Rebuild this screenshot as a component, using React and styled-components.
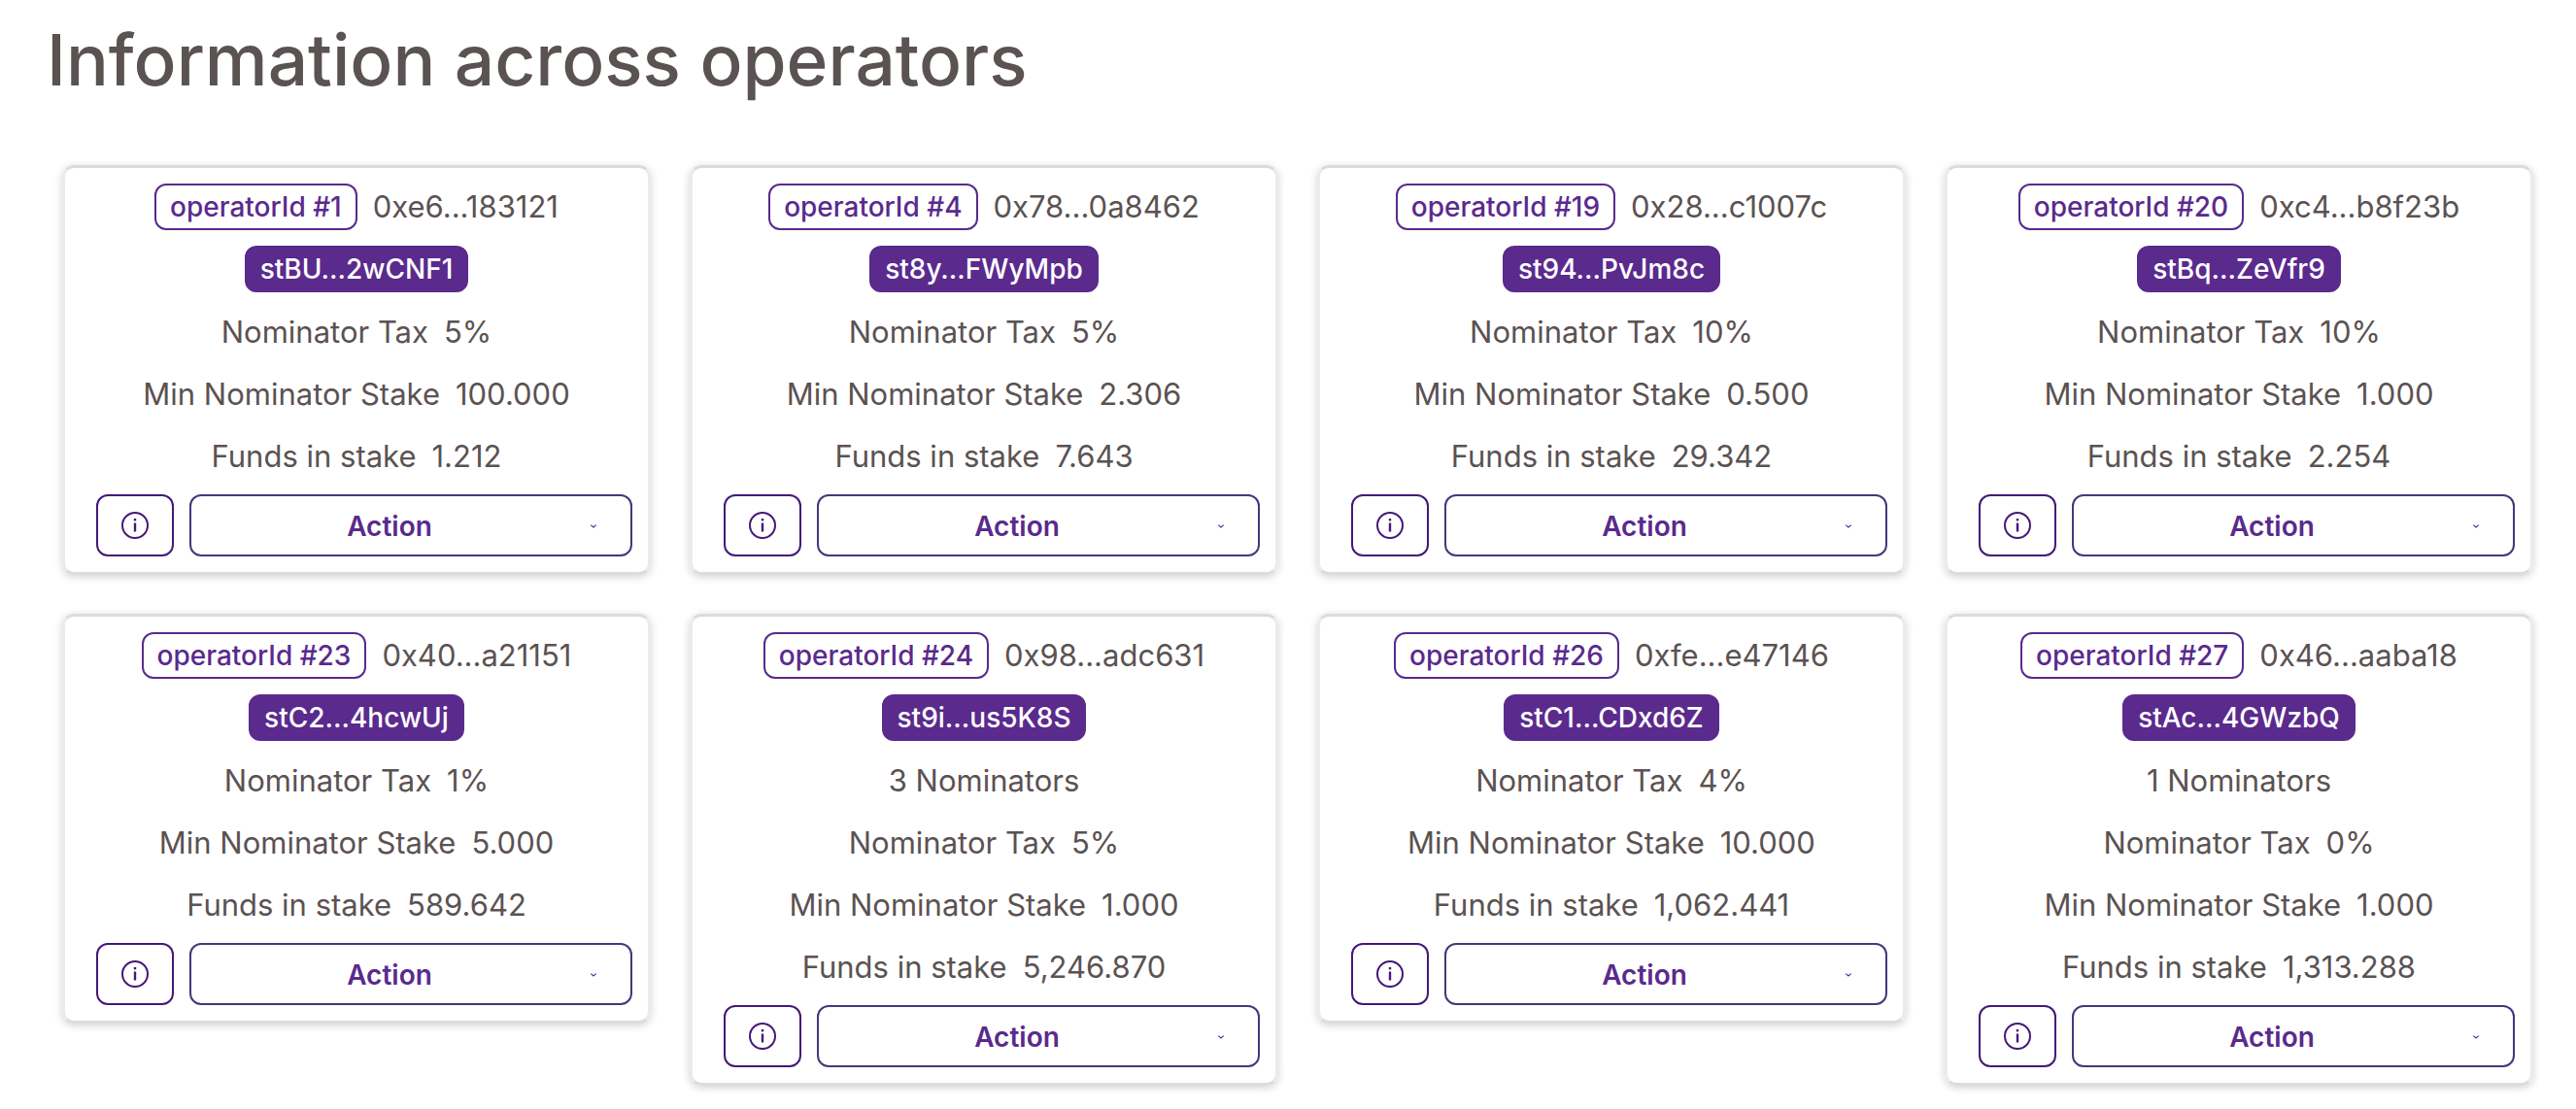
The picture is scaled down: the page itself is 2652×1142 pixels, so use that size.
import React from "react";
import styled, { createGlobalStyle } from "styled-components";

const operators = [
  { id: 1, owner: "0xe6...183121", key: "stBU...2wCNF1", tax: "5%", min: "100.000", funds: "1.212" },
  { id: 4, owner: "0x78...0a8462", key: "st8y...FWyMpb", tax: "5%", min: "2.306", funds: "7.643" },
  { id: 19, owner: "0x28...c1007c", key: "st94...PvJm8c", tax: "10%", min: "0.500", funds: "29.342" },
  { id: 20, owner: "0xc4...b8f23b", key: "stBq...ZeVfr9", tax: "10%", min: "1.000", funds: "2.254" },
  { id: 23, owner: "0x40...a21151", key: "stC2...4hcwUj", tax: "1%", min: "5.000", funds: "589.642" },
  { id: 24, owner: "0x98...adc631", key: "st9i...us5K8S", nominators: 3, tax: "5%", min: "1.000", funds: "5,246.870" },
  { id: 26, owner: "0xfe...e47146", key: "stC1...CDxd6Z", tax: "4%", min: "10.000", funds: "1,062.441" },
  { id: 27, owner: "0x46...aaba18", key: "stAc...4GWzbQ", nominators: 1, tax: "0%", min: "1.000", funds: "1,313.288" },
];

function InfoIcon() {
  return (
    <svg width="28" height="28" viewBox="0 0 28 28" fill="none" aria-hidden="true">
      <circle cx="14" cy="14" r="13" stroke="currentColor" strokeWidth="2" />
      <path d="M14 11.5v9" stroke="currentColor" strokeWidth="2.4" />
      <path d="M14 7v2.4" stroke="currentColor" strokeWidth="2.4" />
    </svg>
  );
}

function ChevronIcon() {
  return (
    <svg width="16" height="16" viewBox="0 0 16 16" fill="none" aria-hidden="true">
      <path d="M5.3 6.6L8 9l2.7-2.4" stroke="currentColor" strokeWidth="1.2" />
    </svg>
  );
}

function Stat({ label, value }) {
  return (
    <StatRow>
      <span>{label}</span>
      <span>{value}</span>
    </StatRow>
  );
}

function OperatorCard({ data }) {
  return (
    <Card>
      <Row>
        <Badge>operatorId #{data.id}</Badge>
        <span>{data.owner}</span>
      </Row>
      <Row>
        <Badge $solid>{data.key}</Badge>
      </Row>
      {data.nominators && <StatRow>{data.nominators} Nominators</StatRow>}
      <Stat label="Nominator Tax" value={data.tax} />
      <Stat label="Min Nominator Stake" value={data.min} />
      <Stat label="Funds in stake" value={data.funds} />
      <Actions>
        <InfoButton type="button" aria-label={`Operator ${data.id} details`}>
          <InfoIcon />
        </InfoButton>
        <ActionButton type="button" aria-haspopup="menu">
          <span>Action</span>
          <ChevronIcon />
        </ActionButton>
      </Actions>
    </Card>
  );
}

function App() {
  return (
    <>
      <GlobalStyle />
      <Page>
        <Title>Information across operators</Title>
        <Grid>
          {operators.map((operator) => (
            <OperatorCard key={operator.id} data={operator} />
          ))}
        </Grid>
      </Page>
    </>
  );
}

export default App;

const GlobalStyle = createGlobalStyle`
  * {
    box-sizing: border-box;
  }
  body {
    margin: 0;
    background: #fff;
    color: #5b5252;
    font-family: Inter, "Liberation Sans", sans-serif;
  }
`;

const Page = styled.main`
  padding: 14px 44px 24px 48px;
`;

const Title = styled.h1`
  margin: 0;
  font-size: 73px;
  font-weight: 500;
  line-height: 96px;
`;

const Grid = styled.div`
  display: grid;
  grid-template-columns: repeat(4, minmax(0, 1fr));
  align-items: start;
  gap: 40px;
  margin-top: 60px;
  padding-left: 16px;
`;

const Card = styled.article`
  display: flex;
  flex-direction: column;
  gap: 16px;
  padding: 16px;
  border: 3px solid #ebebeb;
  border-top-color: #dddcdd;
  border-bottom-color: #dcdcdc;
  border-radius: 12px;
  box-shadow: 0 2px 8px rgba(0, 0, 0, 0.18);
`;

const Row = styled.div`
  display: flex;
  align-items: center;
  justify-content: center;
  gap: 16px;
  font-size: 31px;
  line-height: 48px;
  white-space: nowrap;
`;

const StatRow = styled(Row)`
  padding-top: 2px;
  line-height: 46px;
`;

const Badge = styled.span`
  padding: 0 14px;
  border: 2px solid #5a2a8d;
  border-radius: 12px;
  background: ${({ $solid }) => ($solid ? "#5a2a8d" : "#fff")};
  color: ${({ $solid }) => ($solid ? "#fff" : "#5a2a8d")};
  font-size: 28px;
  font-weight: 500;
  line-height: 44px;
`;

const Actions = styled.div`
  display: flex;
  gap: 16px;
  padding-left: 16px;
`;

const Button = styled.button`
  display: flex;
  align-items: center;
  justify-content: center;
  height: 64px;
  border-radius: 12px;
  background: #fff;
  cursor: pointer;
`;

const InfoButton = styled(Button)`
  width: 80px;
  padding: 0;
  border: 2px solid #451878;
  color: #451878;
`;

const ActionButton = styled(Button)`
  flex: 1;
  gap: 28px;
  padding: 2px 30px 0;
  border: 2px solid #49357b;
  color: #5a2a8d;
  font-family: inherit;
  font-size: 28px;
  font-weight: 600;
  span {
    flex: 1;
  }
`;
